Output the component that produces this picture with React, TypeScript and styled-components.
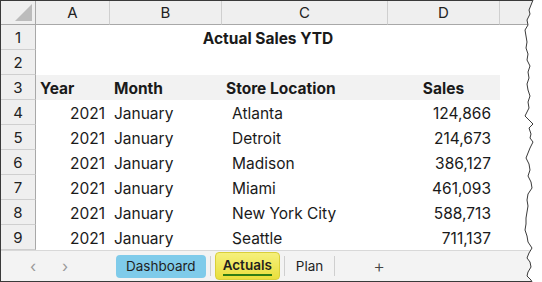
import React from "react";
import styled, { createGlobalStyle } from "styled-components";

const GlobalStyle = createGlobalStyle`
  html, body {
    margin: 0;
    padding: 0;
    background: #ffffff;
  }
  body {
    font-family: Inter, "Open Sans", Arial, sans-serif;
  }
`;

// Styled Components
const Page = styled.div`
  position: relative;
  width: 542px;
  height: 282px;
  overflow: hidden;
  background: #fff;
`;

const Frame = styled.div`
  width: 540px;
  height: 280px;
  border-top: 1px solid #3a3a3a;
  border-left: 1px solid #3a3a3a;
  border-bottom: 1px solid #3a3a3a;
  display: flex;
  flex-direction: column;
`;

const Sheet = styled.div`
  display: grid;
  grid-template-columns: 35px 74px 112px 166px 112px 1fr;
  grid-template-rows: 24px repeat(9, 25px);
  font-size: 15.5px;
  color: #1a1a1a;
`;

const Corner = styled.div`
  background: #efefef;
  border-right: 1px solid #a8a8a8;
  border-bottom: 1px solid #a8a8a8;
  position: relative;
  &::after {
    content: "";
    position: absolute;
    right: 3px;
    bottom: 3px;
    width: 0;
    height: 0;
    border-left: 17px solid transparent;
    border-bottom: 17px solid #bcbcbc;
  }
`;

const ColHead = styled.div`
  background: #efefef;
  border-right: 1px solid #cfcfcf;
  border-bottom: 1px solid #a8a8a8;
  display: flex;
  align-items: center;
  justify-content: center;
  font-size: 15px;
  color: #222;
`;

const RowHead = styled.div`
  background: #efefef;
  border-right: 1px solid #a8a8a8;
  border-bottom: 1px solid #cfcfcf;
  display: flex;
  align-items: center;
  justify-content: center;
  font-size: 15px;
  color: #222;
`;

const Cell = styled.div<{ $align?: string; $bold?: boolean; $fill?: boolean; $pad?: number; $padR?: number }>`
  display: flex;
  align-items: flex-end;
  padding-bottom: 2px;
  justify-content: ${(p) => p.$align || "flex-start"};
  font-weight: ${(p) => (p.$bold ? 700 : 400)};
  background: ${(p) => (p.$fill ? "#f2f2f2" : "transparent")};
  padding-left: ${(p) => p.$pad ?? 4}px;
  padding-right: ${(p) => p.$padR ?? 5}px;
  white-space: nowrap;
  box-sizing: border-box;
`;

const Title = styled.div`
  grid-column: 2 / span 4;
  display: flex;
  align-items: flex-end;
  justify-content: center;
  padding-bottom: 2px;
  font-weight: 700;
`;

const TabBar = styled.div`
  flex: 1;
  background: #f3f3f3;
  border-top: 1px solid #d8d8d8;
  display: flex;
  align-items: center;
  font-size: 13.5px;
  color: #1f1f1f;
`;

const NavArrow = styled.span`
  width: 32px;
  text-align: center;
  color: #9a9a9a;
  font-size: 16px;
`;

const Nav = styled.div`
  display: flex;
  padding-left: 16px;
  width: 99px;
`;

const Tab = styled.div<{ $variant?: "blue" | "yellow" }>`
  height: ${(p) => (p.$variant === "yellow" ? 28 : 23)}px;
  padding: 0 ${(p) => (p.$variant === "yellow" ? 7 : p.$variant === "blue" ? 10 : 7)}px;
  display: flex;
  align-items: center;
  border-radius: 4px;
  box-sizing: border-box;
  background: ${(p) =>
    p.$variant === "blue"
      ? "#7fcbea"
      : p.$variant === "yellow"
      ? "linear-gradient(#f6f07c, #e9df3c)"
      : "transparent"};
  border: ${(p) => (p.$variant === "yellow" ? "1px solid #d9cf3a" : "none")};
  font-weight: ${(p) => (p.$variant === "yellow" ? 600 : 400)};
`;

const Underlined = styled.span`
  border-bottom: 2px solid #2f7d14;
  padding-bottom: 1px;
`;

const Sep = styled.div`
  width: 1px;
  height: 20px;
  background: #cfcfcf;
  margin: 0 4px;
`;

const Plus = styled.span`
  margin-left: 34px;
  font-size: 18px;
  color: #444;
  font-weight: 300;
`;

const TornEdge = styled.svg`
  position: absolute;
  top: 0;
  right: 0;
`;

const rows = [
  ["Atlanta", "124,866"],
  ["Detroit", "214,673"],
  ["Madison", "386,127"],
  ["Miami", "461,093"],
  ["New York City", "588,713"],
  ["Seattle", "711,137"],
];

const edge = [
  [533, 0], [531, 5], [529, 10], [530, 14], [527, 20], [528, 25], [525, 30],
  [526, 36], [527, 42], [526, 48], [528, 54], [527, 60], [530, 66], [528, 72],
  [529, 78], [527, 84], [528, 90], [530, 96], [528, 102], [529, 108], [525, 116],
  [528, 119], [533, 124], [529, 128], [531, 134], [530, 138], [533, 142], [530, 148],
  [528, 153], [526, 158], [529, 164], [530, 170], [528, 176], [531, 182], [532, 188],
  [528, 194], [527, 200], [528, 206], [527, 212], [526, 218], [526, 224], [525, 230],
  [527, 236], [528, 242], [532, 248], [529, 253], [527, 258], [530, 262], [531, 267],
  [528, 272], [527, 276], [531, 280], [532, 282],
];

const App = () => {
  const line = edge.map((p) => p.join(",")).join(" ");
  const fill = line + " 542,282 542,0";

  return (
    <>
      <GlobalStyle />
      <Page>
        <Frame>
          <Sheet>
            <Corner />
            {["A", "B", "C", "D", ""].map((c, i) => (
              <ColHead key={i}>{c}</ColHead>
            ))}

            <RowHead>1</RowHead>
            <Title>Actual Sales YTD</Title>
            <Cell />

            <RowHead>2</RowHead>
            <Cell />
            <Cell />
            <Cell />
            <Cell />
            <Cell />

            <RowHead>3</RowHead>
            <Cell $bold $fill>Year</Cell>
            <Cell $bold $fill>Month</Cell>
            <Cell $bold $fill>Store Location</Cell>
            <Cell $bold $fill $align="center">Sales</Cell>
            <Cell />

            {rows.map(([city, sales], i) => (
              <React.Fragment key={city}>
                <RowHead>{i + 4}</RowHead>
                <Cell $align="flex-end">2021</Cell>
                <Cell>January</Cell>
                <Cell $pad={10}>{city}</Cell>
                <Cell $align="flex-end" $padR={9}>{sales}</Cell>
                <Cell />
              </React.Fragment>
            ))}
          </Sheet>
          <TabBar>
            <Nav>
              <NavArrow>&lsaquo;</NavArrow>
              <NavArrow>&rsaquo;</NavArrow>
            </Nav>
            <Tab $variant="blue">Dashboard</Tab>
            <Sep />
            <Tab $variant="yellow">
              <Underlined>Actuals</Underlined>
            </Tab>
            <Sep />
            <Tab>Plan</Tab>
            <Sep />
            <Plus>+</Plus>
          </TabBar>
        </Frame>
        <TornEdge width="542" height="282" viewBox="0 0 542 282">
          <polygon points={fill} fill="#ffffff" />
          <polyline points={line} fill="none" stroke="#3a3a3a" strokeWidth="1" />
        </TornEdge>
      </Page>
    </>
  );
};

export default App;
